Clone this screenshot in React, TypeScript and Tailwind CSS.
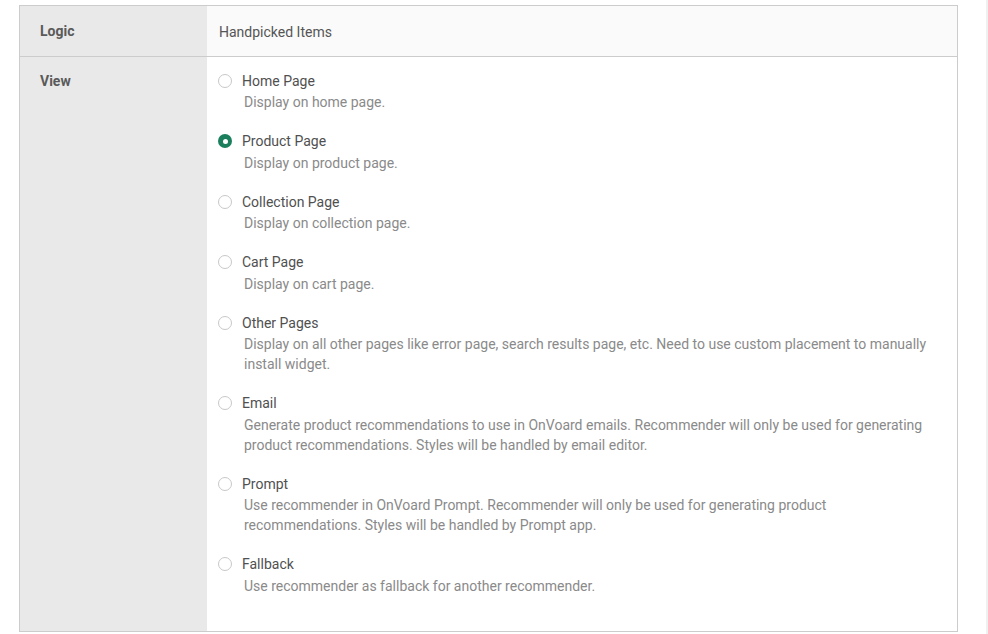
import React from 'react'

const views = [
  { label: 'Home Page', desc: 'Display on home page.' },
  { label: 'Product Page', desc: 'Display on product page.', checked: true },
  { label: 'Collection Page', desc: 'Display on collection page.' },
  { label: 'Cart Page', desc: 'Display on cart page.' },
  {
    label: 'Other Pages',
    desc: 'Display on all other pages like error page, search results page, etc. Need to use custom placement to manually install widget.',
  },
  {
    label: 'Email',
    desc: 'Generate product recommendations to use in OnVoard emails. Recommender will only be used for generating product recommendations. Styles will be handled by email editor.',
  },
  {
    label: 'Prompt',
    desc: 'Use recommender in OnVoard Prompt. Recommender will only be used for generating product recommendations. Styles will be handled by Prompt app.',
  },
  { label: 'Fallback', desc: 'Use recommender as fallback for another recommender.' },
]

function Radio({ checked }: { checked?: boolean }) {
  if (checked) {
    return (
      <span className="w-[14px] h-[14px] rounded-full bg-[#1b7f5e] flex items-center justify-center shrink-0">
        <span className="w-[5px] h-[5px] rounded-full bg-white" />
      </span>
    )
  }
  return <span className="w-[14px] h-[14px] rounded-full border border-[#c8c8c8] bg-white shrink-0" />
}

export default function App() {
  return (
    <div className="w-[988px] h-[634px] bg-white flex font-['Roboto',sans-serif] text-[14px]">
      <div className="flex-1 pl-[19px] pt-[5px]">
        <div className="w-[939px] border border-[#cccccc]">
          {/* Logic */}
          <div className="flex border-b border-[#cccccc]">
            <div className="w-[187px] bg-[#e9e9e9] pl-5 h-[50px] flex items-center font-bold text-[#5a5a5a]">
              Logic
            </div>
            <div className="flex-1 bg-[#fafafa] pl-3 flex items-center text-[#555555] pt-[2px]">
              Handpicked Items
            </div>
          </div>

          {/* View */}
          <div className="flex">
            <div className="w-[187px] bg-[#e9e9e9] pl-5 pt-[14px] font-bold text-[#5a5a5a] leading-5">View</div>
            <div className="flex-1 pl-[11px] pr-6 pt-[13px] pb-[17px]">
              {views.map((v) => (
                <div key={v.label} className="mb-[18.5px]">
                  <div className="flex items-center gap-[10px] h-[21px]">
                    <Radio checked={v.checked} />
                    <span className="text-[#505050] leading-5">{v.label}</span>
                  </div>
                  <p className="pl-[26px] mt-[1px] text-[#8a8a8a] leading-5">{v.desc}</p>
                </div>
              ))}
            </div>
          </div>
        </div>
      </div>
      <div className="w-[2px] bg-[#f0f0f0] shrink-0" />
    </div>
  )
}
